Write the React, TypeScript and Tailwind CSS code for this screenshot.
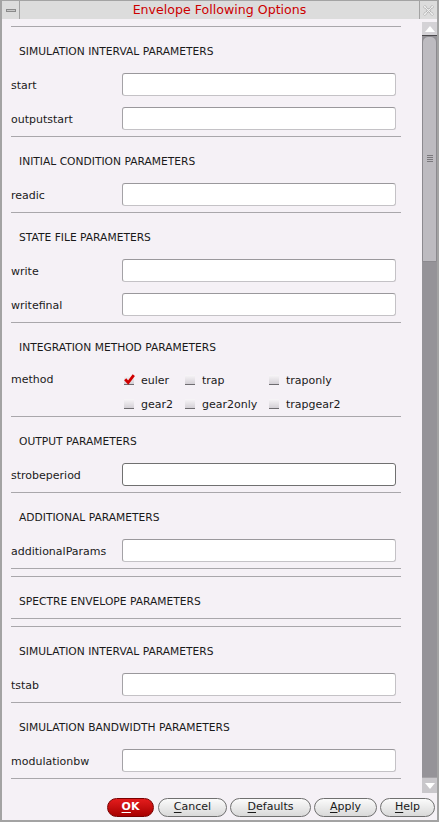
const font = "font-['DejaVu_Sans',_'Liberation_Sans',_sans-serif]";

function Line() {
  return <div className="h-px bg-[#a9a7ab] mb-px" />;
}

function Heading({ text }: { text: string }) {
  return (
    <div className="h-10 pl-2 pt-[17px] text-[10.7px] leading-[14px] text-[#1a1a1a]">
      {text}
    </div>
  );
}

function Field({ label, focused }: { label: string; focused?: boolean }) {
  return (
    <div className="h-[34px] flex items-start pt-[5px]">
      <div className="w-[111px] leading-[25px] text-[11px] text-[#1a1a1a]">{label}</div>
      <div
        className={
          focused
            ? "w-[274px] h-[23px] bg-white rounded-[3px] border border-[#707070]"
            : "w-[274px] h-[23px] bg-white rounded-[3px] border border-[#c4c2c6] border-t-[#9a989c] border-l-[#a4a2a6]"
        }
      />
    </div>
  );
}

function Check({ label, checked }: { label: string; checked?: boolean }) {
  return (
    <div className="flex items-center gap-[7px]">
      <div className="relative w-[10px] h-[10px] bg-gradient-to-b from-[#f8f6f8] to-[#d4d0d6] border-b border-[#6e6c70]">
        {checked && (
          <svg className="absolute -top-[1px] left-0" width="11" height="11" viewBox="0 0 11 11">
            <path d="M1.2 5.2 L4.2 8.6 L9.8 1.2" stroke="#d00000" strokeWidth="2.8" fill="none" />
          </svg>
        )}
      </div>
      <span className="text-[11px] leading-[23px] text-[#1a1a1a]">{label}</span>
    </div>
  );
}

function Btn({ label, w, primary }: { label: string; w: string; primary?: boolean }) {
  const first = label.slice(0, 1);
  const rest = label.slice(1);
  return (
    <div
      className={
        primary
          ? `${w} h-[19px] rounded-full border border-[#7a0000] bg-gradient-to-b from-[#e41c1c] to-[#a80000] flex items-center justify-center text-white font-bold text-[11px]`
          : `${w} h-[19px] rounded-full border border-[#6f6f6f] bg-gradient-to-b from-[#fbfbfb] to-[#d9d9d9] flex items-center justify-center text-[#1a1a1a] text-[11px]`
      }
    >
      <span>
        <span className="underline underline-offset-2">{first}</span>
        {rest}
      </span>
    </div>
  );
}

export default function App() {
  return (
    <div className={`${font} w-[439px] h-[822px] bg-[#a3a3a3] flex flex-col px-[2px] pt-px pb-[2px]`}>
      {/* title bar */}
      <div className="h-[18px] flex bg-[#a3a3a3] gap-px">
        <div className="w-[17px] bg-[#dcdcdc] flex items-center justify-center">
          <div className="w-[10px] h-[3px] bg-[#c8c8c8] border border-[#8a8a8a]" />
        </div>
        <div className="flex-1 bg-[#dcdcdc] flex items-center justify-center text-[12.6px] text-[#cc0000]">
          Envelope Following Options
        </div>
        <div className="w-[17px] bg-[#dcdcdc] flex items-center justify-center">
          <svg width="13" height="13" viewBox="0 0 13 13">
            <path d="M2 2 L11 11 M11 2 L2 11" stroke="#b4b4b4" strokeWidth="3" strokeDasharray="1 1" fill="none" />
            <path d="M2 2 L11 11 M11 2 L2 11" stroke="#f0f0f0" strokeWidth="1" fill="none" />
          </svg>
        </div>
      </div>

      {/* body */}
      <div className="flex-1 bg-[#f5f1f6] flex flex-col">
        <div className="h-[774px] flex">
          <div className="flex-1 overflow-hidden pt-[7px]">
            <div className="ml-[9px] w-[390px]">
              <Line />
              <Heading text="SIMULATION INTERVAL PARAMETERS" />
              <Field label="start" />
              <Field label="outputstart" />
              <Line />
              <Heading text="INITIAL CONDITION PARAMETERS" />
              <Field label="readic" />
              <Line />
              <Heading text="STATE FILE PARAMETERS" />
              <Field label="write" />
              <Field label="writefinal" />
              <Line />
              <Heading text="INTEGRATION METHOD PARAMETERS" />
              <div className="h-[52px] pt-[4px] flex">
                <div className="w-[113px] leading-[23px] text-[11px] text-[#1a1a1a]">method</div>
                <div className="grid grid-cols-[61px_84px_1fr]">
                  <Check label="euler" checked />
                  <Check label="trap" />
                  <Check label="traponly" />
                  <Check label="gear2" />
                  <Check label="gear2only" />
                  <Check label="trapgear2" />
                </div>
              </div>
              <Line />
              <Heading text="OUTPUT PARAMETERS" />
              <Field label="strobeperiod" focused />
              <Line />
              <Heading text="ADDITIONAL PARAMETERS" />
              <Field label="additionalParams" />
              <Line />
              <div className="h-[6px]" />
              <Line />
              <Heading text="SPECTRE ENVELOPE PARAMETERS" />
              <Line />
              <div className="h-[6px]" />
              <Line />
              <Heading text="SIMULATION INTERVAL PARAMETERS" />
              <Field label="tstab" />
              <Line />
              <Heading text="SIMULATION BANDWIDTH PARAMETERS" />
              <Field label="modulationbw" />
              <Line />
            </div>
          </div>

          {/* scrollbar */}
          <div className="w-[15px] mt-[3px] flex flex-col bg-[#959398]">
            <div className="h-[14px] bg-[#d4d2d6] border-b border-[#4a484c] flex items-center justify-center">
              <div className="w-0 h-0 border-l-[5px] border-r-[5px] border-b-[6px] border-l-transparent border-r-transparent border-b-white" />
            </div>
            <div className="h-[226px] bg-[#bdbbc0] border border-[#8c8a8f] rounded-t-[6px] flex flex-col items-center pt-[118px] gap-px">
              <div className="w-[6px] h-px bg-[#7a787c]" />
              <div className="w-[6px] h-px bg-[#7a787c]" />
              <div className="w-[6px] h-px bg-[#7a787c]" />
              <div className="w-[6px] h-px bg-[#7a787c]" />
            </div>
            <div className="flex-1" />
            <div className="h-[16px] bg-[#c9c7cb] border-t border-[#a5a3a7] flex items-center justify-center">
              <div className="w-0 h-0 border-l-[5px] border-r-[5px] border-t-[6px] border-l-transparent border-r-transparent border-t-white" />
            </div>
          </div>
        </div>

        {/* buttons */}
        <div className="h-[27px] flex items-start justify-end pt-[5px] pr-[2px] gap-[3px]">
          <div className="mr-px">
            <Btn label="OK" w="w-[47px]" primary />
          </div>
          <Btn label="Cancel" w="w-[69px]" />
          <Btn label="Defaults" w="w-[81px]" />
          <Btn label="Apply" w="w-[63px]" />
          <Btn label="Help" w="w-[55px]" />
        </div>
      </div>
    </div>
  );
}
